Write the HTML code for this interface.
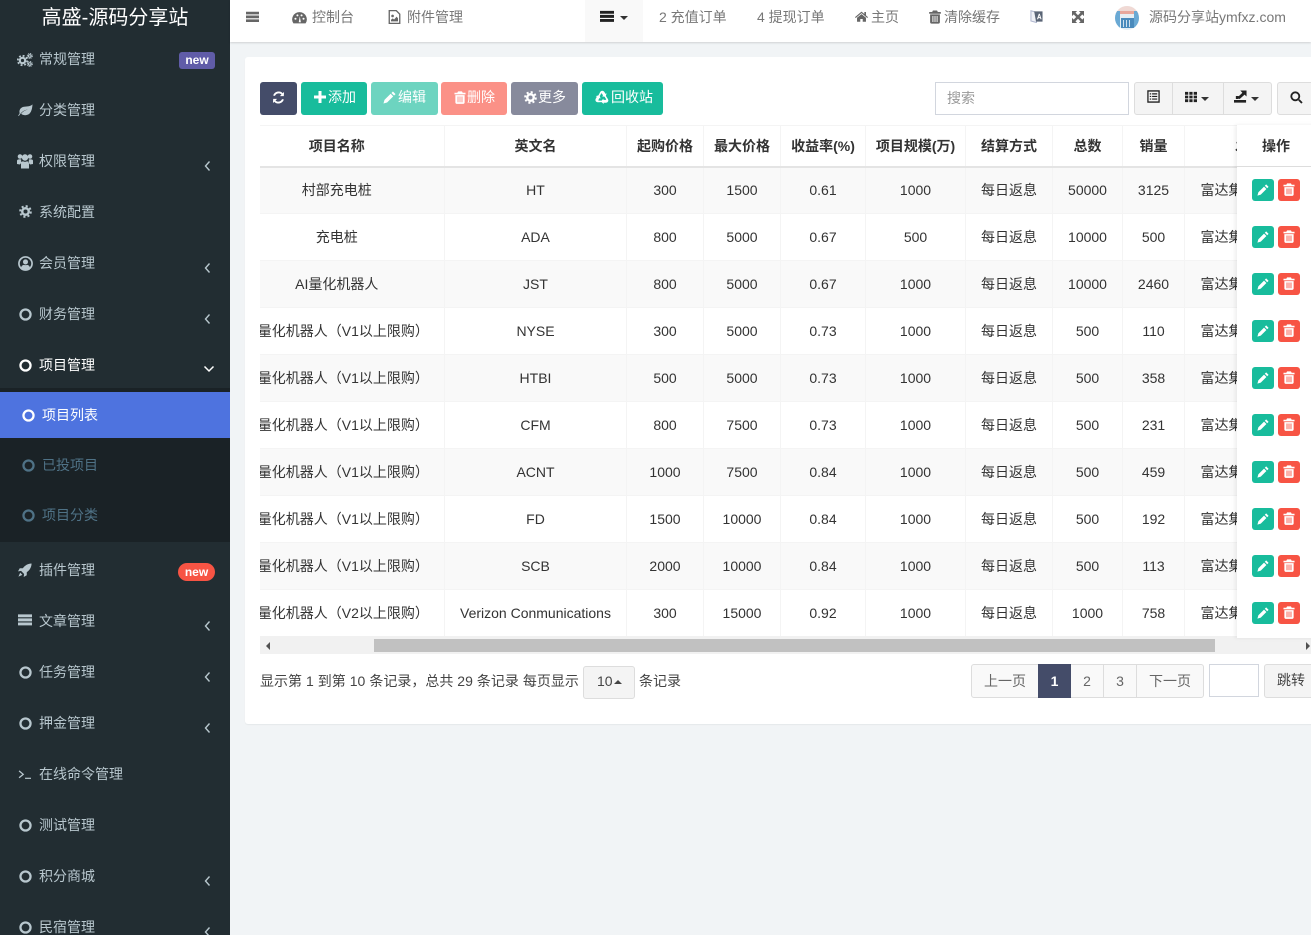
<!DOCTYPE html>
<html lang="zh-CN"><head><meta charset="utf-8"><title>项目列表</title>
<style>
*{box-sizing:border-box}
html,body{margin:0;padding:0;width:1311px;height:935px;overflow:hidden;background:#f1f4f6;font:14px/20px "Liberation Sans","WenQuanYi Zen Hei","Noto Sans CJK SC",sans-serif;color:#333}
.a{position:absolute;white-space:nowrap}
svg{position:absolute;display:block;fill:currentColor}
#side{position:absolute;left:0;top:0;width:230px;height:935px;background:#222d32;overflow:hidden;color:#b8c7ce}
#sub{position:absolute;left:0;top:388px;width:230px;height:154px;background:#1a2226}
#act{position:absolute;left:0;top:392px;width:230px;height:46px;background:#4e73df}
.m{position:absolute;left:39px;white-space:nowrap}
.s{position:absolute;left:42px;color:#4f7286;white-space:nowrap}
#top{position:absolute;left:230px;top:0;width:1081px;height:42px;background:#fff;box-shadow:0 1px 2px rgba(0,0,0,.14)}
.n{position:absolute;top:7px;color:#777;white-space:nowrap}
#panel{position:absolute;left:245px;top:57px;width:1070px;height:667px;background:#fff;border-radius:3px;box-shadow:0 1px 1px rgba(0,0,0,.05)}
.b{position:absolute;top:82px;height:33px;border-radius:3px;color:#fff;line-height:30px;text-align:left;white-space:nowrap}
.g{position:absolute;top:82px;height:33px;background:#f4f4f4;border:1px solid #ddd;color:#333}
#tw{position:absolute;left:260px;top:125px;width:977px;height:511px;overflow:hidden}
table{position:absolute;left:-30px;top:0;width:1080px;border-collapse:collapse;table-layout:fixed}
th,td{text-align:center;white-space:nowrap;overflow:hidden;padding:0 0 0 1px;border-left:1px solid #f4f4f4}
th:first-child,td:first-child{border-left:0;padding:0}
th{height:41px;font-weight:bold;border-top:1px solid #f4f4f4;border-bottom:2px solid #e4e4e4}
td{height:47px;border-bottom:1px solid #f4f4f4}
tr.o td{background:#f9f9f9}
#fx{position:absolute;left:1237px;top:125px;width:80px;height:513px;background:#fff;box-shadow:-2px 0 4px rgba(0,0,0,.07)}
.fe,.fd{position:absolute;width:22px;height:22px;border-radius:3px;color:#fff}
.fe{left:1252px;background:#18bc9c}.fd{left:1278px;background:#f75444}
.p{position:absolute;top:664px;height:34px;background:#f9f9f9;border:1px solid #ddd;color:#666;text-align:center;line-height:33px}
</style></head><body>
<svg width="0" height="0" style="position:absolute"><defs>
<symbol id="ring" viewBox="0 0 16 16"><circle cx="8" cy="8" r="6.2" fill="none" stroke="currentColor" stroke-width="2.8"/></symbol>
<symbol id="chl" viewBox="0 0 8 12"><path d="M5.500 1.500 1.500 6l4 4.500" fill="none" stroke="currentColor" stroke-width="1.400"/></symbol>
<symbol id="chd" viewBox="0 0 12 8"><path d="M1.500 1.500 6 6l4.500-4.500" fill="none" stroke="currentColor" stroke-width="1.500"/></symbol>
<symbol id="gear" viewBox="0 0 16 16"><circle cx="8" cy="8" r="4" fill="none" stroke="currentColor" stroke-width="3"/><circle cx="8" cy="8" r="6.600" fill="none" stroke="currentColor" stroke-width="2.400" stroke-dasharray="2.600 2.580"/></symbol>
<symbol id="cogs" viewBox="0 0 16 16"><g fill="none" stroke="currentColor"><circle cx="5.500" cy="8.500" r="2.700" stroke-width="2.200"/><circle cx="5.500" cy="8.500" r="4.700" stroke-width="1.800" stroke-dasharray="1.900 1.790"/><circle cx="12.800" cy="4" r="1.300" stroke-width="1.200"/><circle cx="12.800" cy="4" r="2.500" stroke-width="1" stroke-dasharray="1.100 .86"/><circle cx="12.800" cy="12" r="1.300" stroke-width="1.200"/><circle cx="12.800" cy="12" r="2.500" stroke-width="1" stroke-dasharray="1.100 .86"/></g></symbol>
<symbol id="leaf" viewBox="0 0 16 16"><path d="M15.500 1.500C15 7 14 13 7.500 13 5.500 13 4 12.300 3.300 11.500 5 9 8 7.500 10.500 7 7.500 7.300 4.500 8.800 2.300 11.800L.8 14l-.6-.6 1.600-2.500C.8 8 2.500 4.500 6.500 4c3.500-.4 6.500 0 9-2.500z"/></symbol>
<symbol id="users" viewBox="0 0 16 16"><circle cx="3" cy="3.500" r="2.300"/><circle cx="13" cy="3.500" r="2.300"/><circle cx="8" cy="4.500" r="3.200"/><path d="M0 11V7.800C0 6.800 1 6.300 3 6.300c.5 0 .9.100 1.200.2-.3 1.500.1 2.500.8 3.200-1 .3-1.800 1-2 1.800zM16 11V7.800c0-1-1-1.500-3-1.500-.5 0-.9.100-1.200.2.300 1.500-.1 2.500-.8 3.200 1 .3 1.800 1 2 1.800zM4 15.500V11.500C4 9.300 5 8.500 6 8.300c1 .7 3 .7 4 0 1 .2 2 1 2 3.200v4z"/></symbol>
<symbol id="uc" viewBox="0 0 16 16"><circle cx="8" cy="8" r="7" fill="none" stroke="currentColor" stroke-width="1.800"/><circle cx="8" cy="6.300" r="2.700"/><path d="M3.200 12.500c.4-2 1.800-3 3-3.100.9.500 2.700.5 3.600 0 1.200.1 2.600 1.100 3 3.100-2.500 2.500-7 2.500-9.600 0z"/></symbol>
<symbol id="rocket" viewBox="0 0 16 16"><path d="M15.500.5C11.500.5 8 2.500 5.500 6H2L0 9.500l3.500-.5 3.500 3.500-.5 3.500L10 14v-3.500C13.500 8 15.500 4.500 15.500.5zM2.500 11 .5 15.500 5 13.500z"/></symbol>
<symbol id="bars" viewBox="0 0 16 16"><path d="M0 2h16v2.500H0zM0 6.500h16V9H0zM0 11h16v2.500H0z"/></symbol>
<symbol id="bars2" viewBox="0 0 16 16"><path d="M0 1.500h16v3.300H0zM0 6.200h16v3.300H0zM0 10.900h16v3.300H0z"/></symbol>
<symbol id="term" viewBox="0 0 16 12"><path d="M1 2l4.500 3.800L1 9.600" fill="none" stroke="currentColor" stroke-width="1.400"/><path d="M7.500 9.500H14v1.300H7.500z"/></symbol>
<symbol id="dash" viewBox="0 0 16 16"><path d="M8 2.200A7.800 7.800 0 0 0 1.500 14.300h13A7.800 7.800 0 0 0 8 2.200z"/><g fill="#fff"><circle cx="3.700" cy="9.300" r="1.100"/><circle cx="5.800" cy="5.700" r="1.100"/><circle cx="10.200" cy="5.700" r="1.100"/><circle cx="12.300" cy="9.300" r="1.100"/><path d="M7.200 13 8.300 6.700 9.500 13z"/></g></symbol>
<symbol id="fimg" viewBox="0 0 14 16"><path d="M1 .7h8l4 4v10.600H1z" fill="none" stroke="currentColor" stroke-width="1.500"/><circle cx="4.800" cy="6.800" r="1.500"/><path d="M3 13v-1.800L5 9.500l1.500 1.300L9.500 7.500 11 9.500V13z"/></symbol>
<symbol id="home" viewBox="0 0 16 16"><path d="M8 2 0 8.800l.9 1L8 3.800l7.100 6 .9-1L13.500 6.600V2.500h-2v2.400z"/><path d="M8 5 2.500 9.600V14.500h4v-3.500h3v3.500h4V9.600z"/></symbol>
<symbol id="trash" viewBox="0 0 14 16"><path d="M4.600.4h4.800l.9 1.800h3.500v2H.2v-2h3.500z"/><path d="M1.300 5h11.400v9c0 1-.7 1.800-1.700 1.800H3c-1 0-1.700-.8-1.700-1.800zM4 6.800v7h1.100v-7zM6.450 6.800v7h1.100v-7zM8.900 6.800v7H10v-7z" fill-rule="evenodd"/></symbol>
<symbol id="expand" viewBox="0 0 14 14"><path d="M0 0h6L0 6zM14 0H8l6 6zM0 14h6L0 8zM14 14H8l6-6z"/><path d="M2.500 2.500l9 9M11.500 2.500l-9 9" fill="none" stroke="currentColor" stroke-width="3"/></symbol>
<symbol id="pencil" viewBox="0 0 14 14"><path d="M10.700.5 13.500 3.300 11.900 4.900 9.100 2.100zM8.200 3 11 5.800 4.400 12.400.5 13.500 1.600 9.600z"/></symbol>
<symbol id="plus" viewBox="0 0 12 12"><path d="M4.500 0h3v4.500H12v3H7.500V12h-3V7.500H0v-3h4.500z"/></symbol>
<symbol id="sync" viewBox="0 0 14 14"><path d="M12.700 5.500H8.500L10.200 3.800A4.300 4.300 0 0 0 3.200 5.200L1.200 4.800A6.200 6.200 0 0 1 11.600 2.400L13 1zM1.300 8.500h4.200L3.800 10.200A4.300 4.300 0 0 0 10.800 8.800L12.800 9.200A6.200 6.200 0 0 1 2.400 11.600L1 13z"/></symbol>
<symbol id="recyarm" viewBox="0 0 14 14"><path d="M3.300 5.600 5.200 2C5.700 1.100 6.400.7 7.200.7c1 0 1.700.5 2.200 1.300l1.100 1.900 1.100-.7L10.600 7 7 6.200l1.100-.7L6.900 3.600C6.700 3.300 6.300 3.300 6.100 3.600L5 5.700z"/></symbol>
<symbol id="recy" viewBox="0 0 14 14"><use href="#recyarm" width="14" height="14"/><use href="#recyarm" width="14" height="14" transform="rotate(120 7 7.800)"/><use href="#recyarm" width="14" height="14" transform="rotate(240 7 7.800)"/></symbol>
<symbol id="list" viewBox="0 0 14 14"><path d="M1 1h12v12H1z" fill="none" stroke="currentColor" stroke-width="1.400"/><path d="M3 3.500h1.500v1.300H3zM5.500 3.500H11v1.300H5.500zM3 6.300h1.500v1.300H3zM5.500 6.300H11v1.300H5.500zM3 9.100h1.500v1.300H3zM5.500 9.100H11v1.300H5.500z"/></symbol>
<symbol id="grid" viewBox="0 0 13 13"><path d="M0 1h3.500v3H0zM4.700 1h3.500v3H4.700zM9.400 1H13v3H9.400zM0 5h3.500v3H0zM4.700 5h3.500v3H4.700zM9.400 5H13v3H9.400zM0 9h3.500v3H0zM4.700 9h3.500v3H4.700zM9.400 9H13v3H9.400z"/></symbol>
<symbol id="exp" viewBox="0 0 14 14"><path d="M0 10.800h13v2.800H0zM2 6.500h3v3.200H2zM6.800.5h6.700v6.500L11.400 5 6 9.800 4 7.800 9 2.900z"/></symbol>
<symbol id="search" viewBox="0 0 14 14"><circle cx="5.700" cy="5.700" r="4.300" fill="none" stroke="currentColor" stroke-width="2"/><path d="M8.800 10.200 10.200 8.800 13.600 12.200 12.200 13.600z"/></symbol>
<symbol id="trans" viewBox="0 0 14 14"><path d="M1 .8 7 2.500v11L1 11.800z" fill="#eef0f6" stroke="#b0b7cf" stroke-width="1.100"/><path d="M4.500 1.500H13.500V12.500H6.500z" fill="#5a6576"/><path d="M7.500 10 9.500 4h1l2 6h-1.200l-.4-1.300H9.100L8.700 10zM9.400 7.700h1.200L10 5.700z" fill="#fff"/></symbol>
</defs></svg>

<div id="side">
<div class="a" style="left:0;top:6px;width:230px;text-align:center;font-size:20px;line-height:24px;color:#fff">高盛-源码分享站</div>
<div id="sub"></div><div id="act"></div>

<svg style="left:17px;top:52px;width:16px;height:16px"><use href="#cogs"/></svg><span class="m" style="top:49px">常规管理</span>
<div class="a" style="left:179px;top:52px;width:36px;height:17px;background:#605ca8;border-radius:3px;color:#fff;font-size:12px;font-weight:bold;line-height:17px;text-align:center">new</div>
<svg style="left:18px;top:103px;width:15px;height:15px"><use href="#leaf"/></svg><span class="m" style="top:100px">分类管理</span>
<svg style="left:17px;top:153px;width:16px;height:16px"><use href="#users"/></svg><span class="m" style="top:151px">权限管理</span>
<svg style="left:19px;top:205px;width:13px;height:13px"><use href="#gear"/></svg><span class="m" style="top:202px">系统配置</span>
<svg style="left:18px;top:256px;width:15px;height:15px"><use href="#uc"/></svg><span class="m" style="top:253px">会员管理</span>
<svg style="left:19px;top:308px;width:13px;height:13px"><use href="#ring"/></svg><span class="m" style="top:304px">财务管理</span>
<svg style="left:19px;top:359px;width:13px;height:13px;color:#fff"><use href="#ring"/></svg><span class="m" style="top:355px;color:#fff">项目管理</span>
<svg style="left:22px;top:409px;width:13px;height:13px;color:#fff"><use href="#ring"/></svg><span class="s" style="top:405px;color:#fff">项目列表</span>
<svg style="left:22px;top:459px;width:13px;height:13px;color:#4f7286"><use href="#ring"/></svg><span class="s" style="top:455px">已投项目</span>
<svg style="left:22px;top:509px;width:13px;height:13px;color:#4f7286"><use href="#ring"/></svg><span class="s" style="top:505px">项目分类</span>
<svg style="left:18px;top:563px;width:14px;height:14px"><use href="#rocket"/></svg><span class="m" style="top:560px">插件管理</span>
<div class="a" style="left:178px;top:563px;width:37px;height:18px;background:#f75444;border-radius:9px;color:#fff;font-size:12px;font-weight:bold;line-height:18px;text-align:center">new</div>
<svg style="left:18px;top:613px;width:14px;height:14px"><use href="#bars2"/></svg><span class="m" style="top:611px">文章管理</span>
<svg style="left:19px;top:666px;width:13px;height:13px"><use href="#ring"/></svg><span class="m" style="top:662px">任务管理</span>
<svg style="left:19px;top:717px;width:13px;height:13px"><use href="#ring"/></svg><span class="m" style="top:713px">押金管理</span>
<svg style="left:18px;top:769px;width:15px;height:11px"><use href="#term"/></svg><span class="m" style="top:764px">在线命令管理</span>
<svg style="left:19px;top:819px;width:13px;height:13px"><use href="#ring"/></svg><span class="m" style="top:815px">测试管理</span>
<svg style="left:19px;top:870px;width:13px;height:13px"><use href="#ring"/></svg><span class="m" style="top:866px">积分商城</span>
<svg style="left:19px;top:921px;width:13px;height:13px"><use href="#ring"/></svg><span class="m" style="top:917px">民宿管理</span>

<svg style="left:204px;top:160px;width:8px;height:12px"><use href="#chl"/></svg>
<svg style="left:204px;top:262px;width:8px;height:12px"><use href="#chl"/></svg>
<svg style="left:204px;top:313px;width:8px;height:12px"><use href="#chl"/></svg>
<svg style="left:203px;top:365px;width:12px;height:8px;color:#fff"><use href="#chd"/></svg>
<svg style="left:204px;top:620px;width:8px;height:12px"><use href="#chl"/></svg>
<svg style="left:204px;top:671px;width:8px;height:12px"><use href="#chl"/></svg>
<svg style="left:204px;top:722px;width:8px;height:12px"><use href="#chl"/></svg>
<svg style="left:204px;top:875px;width:8px;height:12px"><use href="#chl"/></svg>
<svg style="left:204px;top:926px;width:8px;height:12px"><use href="#chl"/></svg>
</div>

<div id="top"></div>
<svg style="left:246px;top:10px;width:13px;height:14px;color:#666"><use href="#bars2"/></svg>
<svg style="left:292px;top:10px;width:15px;height:15px;color:#666"><use href="#dash"/></svg><span class="n" style="left:312px">控制台</span>
<svg style="left:388px;top:10px;width:13px;height:14px;color:#666"><use href="#fimg"/></svg><span class="n" style="left:407px">附件管理</span>
<div class="a" style="left:585px;top:0;width:58px;height:42px;background:#f9f9f9"></div>
<svg style="left:600px;top:9px;width:14px;height:15px;color:#222"><use href="#bars2"/></svg>
<div class="a" style="left:620px;top:16px;border:4px solid transparent;border-top-color:#333;border-bottom:0"></div>
<span class="n" style="left:659px">2 充值订单</span>
<span class="n" style="left:757px">4 提现订单</span>
<svg style="left:855px;top:10px;width:13px;height:13px;color:#666"><use href="#home"/></svg><span class="n" style="left:871px">主页</span>
<svg style="left:929px;top:10px;width:12px;height:14px;color:#666"><use href="#trash"/></svg><span class="n" style="left:944px">清除缓存</span>
<svg style="left:1030px;top:10px;width:13px;height:13px"><use href="#trans"/></svg>
<svg style="left:1072px;top:11px;width:12px;height:12px;color:#666"><use href="#expand"/></svg>
<svg style="left:1115px;top:6px;width:24px;height:24px"><defs><clipPath id="cc"><circle cx="12" cy="12" r="12"/></clipPath></defs><g clip-path="url(#cc)"><rect width="24" height="24" fill="#e6eef4"/><rect y="0" width="24" height="5" fill="#f0d9d4"/><rect y="5" width="24" height="3" fill="#e8a79c"/><rect x="0" y="5" width="5" height="19" fill="#6aa9d4"/><rect x="19" y="5" width="5" height="19" fill="#6aa9d4"/><rect x="6" y="12" width="13" height="10" fill="#4a8abc"/><rect x="8" y="14" width="1" height="7" fill="#cfe0ee"/><rect x="11" y="14" width="1" height="7" fill="#cfe0ee"/><rect x="14" y="14" width="1" height="7" fill="#cfe0ee"/></g></svg>
<span class="n" style="left:1149px">源码分享站ymfxz.com</span>

<div id="panel"></div>

<div class="b" style="left:260px;width:37px;background:#444c69"></div>
<svg style="left:272px;top:91px;width:13px;height:13px;color:#fff"><use href="#sync"/></svg>
<div class="b" style="left:301px;width:66px;background:#18bc9c;padding-left:27px">添加</div>
<svg style="left:314px;top:91px;width:12px;height:12px;color:#fff"><use href="#plus"/></svg>
<div class="b" style="left:371px;width:67px;background:#6dd4c0;padding-left:27px">编辑</div>
<svg style="left:383px;top:91px;width:13px;height:13px;color:#fff"><use href="#pencil"/></svg>
<div class="b" style="left:441px;width:66px;background:#fb9187;padding-left:26px">删除</div>
<svg style="left:454px;top:91px;width:12px;height:13px;color:#fff"><use href="#trash"/></svg>
<div class="b" style="left:511px;width:67px;background:#878a9c;padding-left:27px">更多</div>
<svg style="left:524px;top:91px;width:13px;height:13px;color:#fff"><use href="#gear"/></svg>
<div class="b" style="left:582px;width:81px;background:#18bc9c;padding-left:29px">回收站</div>
<svg style="left:595px;top:90px;width:14px;height:14px;color:#fff"><use href="#recy"/></svg>

<div class="a" style="left:935px;top:82px;width:194px;height:33px;border:1px solid #d2d6de;color:#999;padding-left:11px;line-height:31px">搜索</div>
<div class="g" style="left:1134px;width:39px;border-radius:3px 0 0 3px"></div>
<div class="g" style="left:1172px;width:52px"></div>
<div class="g" style="left:1223px;width:49px;border-radius:0 3px 3px 0"></div>
<div class="g" style="left:1277px;width:40px;border-radius:3px"></div>
<svg style="left:1147px;top:90px;width:13px;height:13px;color:#222"><use href="#list"/></svg>
<svg style="left:1185px;top:91px;width:12px;height:12px;color:#222"><use href="#grid"/></svg>
<div class="a" style="left:1201px;top:97px;border:4px solid transparent;border-top-color:#333;border-bottom:0"></div>
<svg style="left:1234px;top:90px;width:13px;height:13px;color:#222"><use href="#exp"/></svg>
<div class="a" style="left:1251px;top:97px;border:4px solid transparent;border-top-color:#333;border-bottom:0"></div>
<svg style="left:1290px;top:91px;width:13px;height:13px;color:#222"><use href="#search"/></svg>

<div id="tw"><table>
<colgroup><col style="width:214px"><col style="width:182px"><col style="width:77px"><col style="width:77px"><col style="width:85px"><col style="width:100px"><col style="width:87px"><col style="width:70px"><col style="width:62px"><col style="width:126px"></colgroup>
<tr><th>项目名称</th><th>英文名</th><th>起购价格</th><th>最大价格</th><th>收益率(%)</th><th>项目规模(万)</th><th>结算方式</th><th>总数</th><th>销量</th><th style="text-align:left;padding-left:50.500px">发行方</th></tr>
<tr class="o"><td>村部充电桩</td><td>HT</td><td>300</td><td>1500</td><td>0.61</td><td>1000</td><td>每日返息</td><td>50000</td><td>3125</td><td style="text-align:left;padding-left:16px">富达集团</td></tr>
<tr><td>充电桩</td><td>ADA</td><td>800</td><td>5000</td><td>0.67</td><td>500</td><td>每日返息</td><td>10000</td><td>500</td><td style="text-align:left;padding-left:16px">富达集团</td></tr>
<tr class="o"><td>AI量化机器人</td><td>JST</td><td>800</td><td>5000</td><td>0.67</td><td>1000</td><td>每日返息</td><td>10000</td><td>2460</td><td style="text-align:left;padding-left:16px">富达集团</td></tr>
<tr><td>AI量化机器人（V1以上限购）</td><td>NYSE</td><td>300</td><td>5000</td><td>0.73</td><td>1000</td><td>每日返息</td><td>500</td><td>110</td><td style="text-align:left;padding-left:16px">富达集团</td></tr>
<tr class="o"><td>AI量化机器人（V1以上限购）</td><td>HTBI</td><td>500</td><td>5000</td><td>0.73</td><td>1000</td><td>每日返息</td><td>500</td><td>358</td><td style="text-align:left;padding-left:16px">富达集团</td></tr>
<tr><td>AI量化机器人（V1以上限购）</td><td>CFM</td><td>800</td><td>7500</td><td>0.73</td><td>1000</td><td>每日返息</td><td>500</td><td>231</td><td style="text-align:left;padding-left:16px">富达集团</td></tr>
<tr class="o"><td>AI量化机器人（V1以上限购）</td><td>ACNT</td><td>1000</td><td>7500</td><td>0.84</td><td>1000</td><td>每日返息</td><td>500</td><td>459</td><td style="text-align:left;padding-left:16px">富达集团</td></tr>
<tr><td>AI量化机器人（V1以上限购）</td><td>FD</td><td>1500</td><td>10000</td><td>0.84</td><td>1000</td><td>每日返息</td><td>500</td><td>192</td><td style="text-align:left;padding-left:16px">富达集团</td></tr>
<tr class="o"><td>AI量化机器人（V1以上限购）</td><td>SCB</td><td>2000</td><td>10000</td><td>0.84</td><td>1000</td><td>每日返息</td><td>500</td><td>113</td><td style="text-align:left;padding-left:16px">富达集团</td></tr>
<tr><td>AI量化机器人（V2以上限购）</td><td>Verizon Conmunications</td><td>300</td><td>15000</td><td>0.92</td><td>1000</td><td>每日返息</td><td>1000</td><td>758</td><td style="text-align:left;padding-left:16px">富达集团</td></tr>
</table></div>

<div class="a" style="left:260px;top:636px;width:1051px;height:18px;background:#f1f1f1"></div>
<div class="a" style="left:374px;top:639px;width:841px;height:13px;background:#c1c1c1"></div>
<div class="a" style="left:266px;top:642px;border:4px solid transparent;border-right-color:#505050;border-left:0"></div>
<div class="a" style="left:1306px;top:642px;border:4px solid transparent;border-left-color:#505050;border-right:0"></div>

<div id="fx"></div>
<div class="a" style="left:1237px;top:166px;width:74px;height:1px;background:#ddd"></div>
<div class="a" style="left:1262px;top:136px;font-weight:bold">操作</div>
<div class="fe" style="top:179px"></div><div class="fd" style="top:179px"></div>
<div class="fe" style="top:226px"></div><div class="fd" style="top:226px"></div>
<div class="fe" style="top:273px"></div><div class="fd" style="top:273px"></div>
<div class="fe" style="top:320px"></div><div class="fd" style="top:320px"></div>
<div class="fe" style="top:367px"></div><div class="fd" style="top:367px"></div>
<div class="fe" style="top:414px"></div><div class="fd" style="top:414px"></div>
<div class="fe" style="top:461px"></div><div class="fd" style="top:461px"></div>
<div class="fe" style="top:508px"></div><div class="fd" style="top:508px"></div>
<div class="fe" style="top:555px"></div><div class="fd" style="top:555px"></div>
<div class="fe" style="top:602px"></div><div class="fd" style="top:602px"></div>
<svg style="left:1257px;top:184px;width:12px;height:12px;color:#fff"><use href="#pencil"/></svg><svg style="left:1283px;top:183px;width:12px;height:13px;color:#fff"><use href="#trash"/></svg>
<svg style="left:1257px;top:231px;width:12px;height:12px;color:#fff"><use href="#pencil"/></svg><svg style="left:1283px;top:230px;width:12px;height:13px;color:#fff"><use href="#trash"/></svg>
<svg style="left:1257px;top:278px;width:12px;height:12px;color:#fff"><use href="#pencil"/></svg><svg style="left:1283px;top:277px;width:12px;height:13px;color:#fff"><use href="#trash"/></svg>
<svg style="left:1257px;top:325px;width:12px;height:12px;color:#fff"><use href="#pencil"/></svg><svg style="left:1283px;top:324px;width:12px;height:13px;color:#fff"><use href="#trash"/></svg>
<svg style="left:1257px;top:372px;width:12px;height:12px;color:#fff"><use href="#pencil"/></svg><svg style="left:1283px;top:371px;width:12px;height:13px;color:#fff"><use href="#trash"/></svg>
<svg style="left:1257px;top:419px;width:12px;height:12px;color:#fff"><use href="#pencil"/></svg><svg style="left:1283px;top:418px;width:12px;height:13px;color:#fff"><use href="#trash"/></svg>
<svg style="left:1257px;top:466px;width:12px;height:12px;color:#fff"><use href="#pencil"/></svg><svg style="left:1283px;top:465px;width:12px;height:13px;color:#fff"><use href="#trash"/></svg>
<svg style="left:1257px;top:513px;width:12px;height:12px;color:#fff"><use href="#pencil"/></svg><svg style="left:1283px;top:512px;width:12px;height:13px;color:#fff"><use href="#trash"/></svg>
<svg style="left:1257px;top:560px;width:12px;height:12px;color:#fff"><use href="#pencil"/></svg><svg style="left:1283px;top:559px;width:12px;height:13px;color:#fff"><use href="#trash"/></svg>
<svg style="left:1257px;top:607px;width:12px;height:12px;color:#fff"><use href="#pencil"/></svg><svg style="left:1283px;top:606px;width:12px;height:13px;color:#fff"><use href="#trash"/></svg>

<div class="a" style="left:260px;top:671px;color:#444;word-spacing:.1px">显示第 1 到第 10 条记录，总共 29 条记录 每页显示</div>
<div class="a" style="left:583px;top:666px;width:52px;height:33px;background:#f4f4f4;border:1px solid #ddd;border-radius:3px;line-height:29px;padding-left:13px;color:#444">10</div>
<div class="a" style="left:614px;top:680px;border:4px solid transparent;border-bottom-color:#444;border-top:0"></div>
<div class="a" style="left:639px;top:671px;color:#444">条记录</div>

<div class="p" style="left:971px;width:68px;border-radius:3px 0 0 3px">上一页</div>
<div class="p" style="left:1070px;width:34px">2</div>
<div class="p" style="left:1103px;width:34px">3</div>
<div class="p" style="left:1136px;width:68px;border-radius:0 3px 3px 0">下一页</div>
<div class="p" style="left:1038px;width:33px;background:#444c69;border-color:#444c69;color:#fff;font-weight:bold">1</div>
<div class="a" style="left:1209px;top:664px;width:50px;height:33px;background:#fff;border:1px solid #d2d6de"></div>
<div class="a" style="left:1264px;top:664px;width:55px;height:34px;background:#f4f4f4;border:1px solid #ddd;border-radius:3px;line-height:31px;padding-left:12px;color:#444">跳转</div>
</body></html>
